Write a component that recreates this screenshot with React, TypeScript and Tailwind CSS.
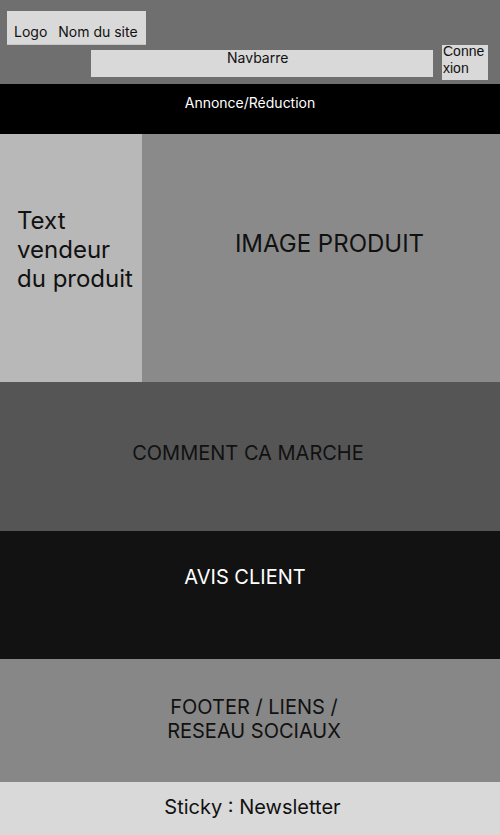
import React from "react";

export default function App() {
  return (
    <div className="w-[500px] h-[835px] overflow-hidden flex flex-col text-black" style={{ fontFamily: "Inter, 'Noto Sans', sans-serif" }}>
      {/* Header */}
      <header className="bg-[#6f6f6f] h-[84px] flex flex-col shrink-0">
        <div className="pt-[11px] pl-[7px] flex">
          <div className="w-[139px] h-[34px] bg-[#d9d9d9] border-b border-[#c6c6c6] flex items-start pt-[12px] pl-[7px] gap-[11px] text-[14px] leading-[17px] text-[#111]">
            <span>Logo</span>
            <span>Nom du site</span>
          </div>
        </div>
        <div className="flex items-start">
          <div className="ml-[91px] mt-[5px] w-[342px] h-[27px] bg-[#d9d9d9] pl-[136px] text-[14px] leading-[17px] text-[#111]">
            <div className="-mt-[1px]">Navbarre</div>
          </div>
          <div className="ml-[9px] w-[46px] h-[35px] bg-[#d9d9d9] overflow-visible">
            <div className="-mt-[2px] pl-[1px] text-[14px] leading-[17px] break-all text-[#111]" style={{ fontFamily: "'Liberation Sans', Arial, sans-serif" }}>
              Connexion
            </div>
          </div>
        </div>
      </header>

      {/* Annonce */}
      <div className="bg-black h-[50px] shrink-0 pt-[10px] text-center text-white text-[14px] leading-[17px]">
        Annonce/Réduction
      </div>

      {/* Hero */}
      <section className="flex h-[248px] shrink-0">
        <div className="w-[142px] bg-[#b8b8b8] pl-[17px] pt-[72px] text-[24px] leading-[29px] text-[#111]">
          Text<br />vendeur<br />du produit
        </div>
        <div className="flex-1 bg-[#8a8a8a] pt-[95px] pl-[17px] text-center text-[24px] leading-[29px] text-[#111]">
          IMAGE PRODUIT
        </div>
      </section>

      {/* Comment ça marche */}
      <section className="bg-[#555555] h-[149px] shrink-0 pt-[59px] pr-[4px] text-center text-[20px] leading-[24px] text-[#111]">
        COMMENT CA MARCHE
      </section>

      {/* Avis client */}
      <section className="bg-[#121212] h-[128px] shrink-0 pt-[34px] pr-[10px] text-center text-[20px] leading-[24px] text-white">
        AVIS CLIENT
      </section>

      {/* Footer */}
      <footer className="bg-[#878787] h-[123px] shrink-0 pt-[36px] pl-[8px] text-center text-[20px] leading-[24px] text-[#111]">
        FOOTER / LIENS /<br />RESEAU SOCIAUX
      </footer>

      {/* Sticky */}
      <div className="bg-[#d9d9d9] flex-1 pt-[13px] pl-[5px] text-center text-[20px] leading-[24px] text-[#111]">
        Sticky : Newsletter
      </div>
    </div>
  );
}
